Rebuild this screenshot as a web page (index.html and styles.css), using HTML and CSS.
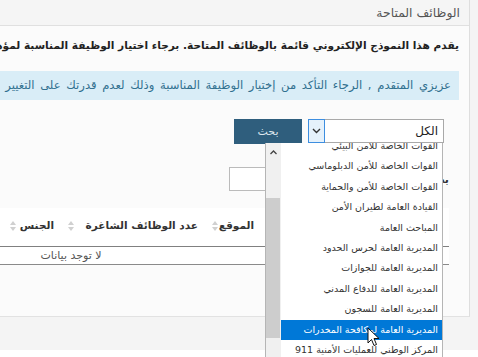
FILE: index.html
```html
<!DOCTYPE html>
<html lang="ar" dir="rtl">
<head>
    <meta charset="UTF-8">
    <meta name="viewport" content="width=device-width, initial-scale=1.0">
    <title>الوظائف المتاحة</title>
    <link rel="stylesheet" href="styles.css">
</head>
<body>
    <div class="page">
        <div class="panel">
            <div class="panel-heading">الوظائف المتاحة</div>
            <div class="panel-body">
                <p class="intro">يقدم هذا النموذج الإلكتروني قائمة بالوظائف المتاحة. برجاء اختيار الوظيفة المناسبة لمؤهلاتك العلمية وخبراتك العملية.</p>
                <div class="alert">عزيزي المتقدم , الرجاء التأكد من إختيار الوظيفة المناسبة وذلك لعدم قدرتك على التغيير فيما بعد.</div>

                <div class="search-row">
                    <div class="select-wrap">
                        <div class="select">
                            <span class="select-value">الكل</span>
                            <span class="select-arrow">
                                <svg width="9" height="6" viewBox="0 0 9 6"><path d="M1 1 L4.5 4.5 L8 1" fill="none" stroke="#333" stroke-width="1.4"/></svg>
                            </span>
                        </div>
                        <div class="select-list">
                            <ul class="options">
                                <li>القوات الخاصة للأمن البيئي</li>
                                <li>القوات الخاصة للأمن الدبلوماسي</li>
                                <li>القوات الخاصة للأمن والحماية</li>
                                <li>القيادة العامة لطيران الأمن</li>
                                <li>المباحث العامة</li>
                                <li>المديرية العامة لحرس الحدود</li>
                                <li>المديرية العامة للجوازات</li>
                                <li>المديرية العامة للدفاع المدني</li>
                                <li>المديرية العامة للسجون</li>
                                <li class="selected">المديرية العامة لمكافحة المخدرات</li>
                                <li>المركز الوطني للعمليات الأمنية 911</li>
                            </ul>
                            <div class="scrollbar">
                                <span class="scroll-up">
                                    <svg width="7" height="5" viewBox="0 0 7 5"><path d="M0.5 4 L3.5 1 L6.5 4" fill="none" stroke="#444" stroke-width="1.3"/></svg>
                                </span>
                                <span class="scroll-thumb"></span>
                            </div>
                        </div>
                    </div>
                    <button class="btn-search">بحث</button>
                </div>

                <div class="table-wrap">
                    <div class="table-tools">
                        <label class="filter">بحث: <input type="search"></label>
                    </div>
                    <table class="jobs">
                        <colgroup>
                            <col style="width: 187px">
                            <col style="width: 56px">
                            <col style="width: 144px">
                            <col style="width: 58px">
                            <col>
                        </colgroup>
                        <thead>
                            <tr>
                                <th>الوظيفة</th>
                                <th>الموقع<span class="sort"><svg width="6" height="10" viewBox="0 0 6 10"><path d="M3 0 L6 4 L0 4 Z M3 10 L6 6 L0 6 Z" fill="#d0d0d0"/></svg></span></th>
                                <th>عدد الوظائف الشاغرة<span class="sort"><svg width="6" height="10" viewBox="0 0 6 10"><path d="M3 0 L6 4 L0 4 Z M3 10 L6 6 L0 6 Z" fill="#d0d0d0"/></svg></span></th>
                                <th>الجنس<span class="sort"><svg width="6" height="10" viewBox="0 0 6 10"><path d="M3 0 L6 4 L0 4 Z M3 10 L6 6 L0 6 Z" fill="#d0d0d0"/></svg></span></th>
                                <th></th>
                            </tr>
                        </thead>
                        <tbody>
                            <tr>
                                <td colspan="5" class="empty">لا توجد بيانات</td>
                            </tr>
                        </tbody>
                    </table>
                </div>
            </div>
        </div>
        <div class="page-gap"></div>
    </div>

    <svg class="cursor" width="13" height="20" viewBox="0 0 13 20">
        <path d="M1 1 L1 16 L4.5 12.5 L7 18.5 L9.5 17.5 L7 11.5 L12 11.5 Z" fill="#fff" stroke="#111" stroke-width="1" stroke-linejoin="round"/>
    </svg>
</body>
</html>
```

FILE: styles.css
```css
body {
    font-family: "DejaVu Sans", sans-serif;
    margin: 0;
    padding: 0;
    background-color: #fff;
    color: #333;
    overflow: hidden;
    height: 357px;
}

.page {
    padding-right: 8px;
    background-color: #f4f4f4;
}

.panel {
    width: 1000px;
    border-right: 1px solid #dedede;
    border-bottom: 1px solid #e2e2e2;
    background-color: #fbfbfb;
}

.panel-heading {
    height: 25px;
    line-height: 25px;
    padding-right: 9px;
    font-size: 12.4px;
    color: #555;
    background-color: #f5f5f5;
    border-bottom: 1px solid #e0e0e0;
}

.panel-body {
    padding: 12px 10px 51px 0;
}

.intro {
    margin: 0;
    font-size: 10.6px;
    line-height: 15px;
    font-weight: bold;
    color: #222;
    white-space: nowrap;
}

.alert {
    margin-top: 18px;
    padding: 7px 8px;
    font-size: 11.6px;
    line-height: 15px;
    word-spacing: 2px;
    color: #31708f;
    background-color: #d9edf7;
    white-space: nowrap;
}

.search-row {
    display: flex;
    gap: 6px;
    margin-top: 19px;
    padding-right: 15px;
    height: 25px;
}

.select-wrap {
    position: relative;
    width: 136px;
    height: 24px;
}

.select {
    display: flex;
    height: 24px;
    box-sizing: border-box;
    border: 1px solid #a9a9a9;
    background-color: #fff;
}

.select-value {
    flex: 1;
    padding-right: 5px;
    font-size: 12px;
    line-height: 22px;
    color: #222;
}

.select-arrow {
    display: flex;
    align-items: center;
    justify-content: center;
    width: 15px;
    margin: -1px;
    border: 1px solid #3d8ee0;
    background-color: #e5f1fb;
}

.select-list {
    position: absolute;
    top: 24px;
    right: 1px;
    width: 178px;
    height: 216px;
    box-sizing: border-box;
    display: flex;
    overflow: hidden;
    border: 1px solid #b5b5b5;
    border-top: none;
    background-color: #fff;
    z-index: 5;
}

.options {
    flex: 1;
    list-style: none;
    margin: -7px 0 0;
    padding: 0;
}

.options li {
    height: 20.4px;
    line-height: 20.4px;
    padding-right: 4px;
    font-size: 9.5px;
    color: #333;
    white-space: nowrap;
}

.options li.selected {
    background-color: #0078d7;
    color: #fff;
}

.scrollbar {
    position: relative;
    width: 15px;
    background-color: #f0f0f0;
}

.scroll-up {
    display: flex;
    justify-content: center;
    padding-top: 7px;
}

.scroll-thumb {
    position: absolute;
    top: 55px;
    right: 1px;
    left: 0;
    height: 140px;
    background-color: #cdcdcd;
}

.btn-search {
    width: 68px;
    height: 25px;
    padding: 0;
    border: none;
    font-family: "DejaVu Sans", sans-serif;
    font-size: 11px;
    color: #dfe8ef;
    background-color: #2f5e7d;
}

.table-wrap {
    margin-right: 10px;
}

.table-tools {
    margin-top: 23px;
    height: 24px;
}

.filter {
    display: flex;
    align-items: center;
    gap: 4px;
    font-size: 11px;
    font-weight: bold;
    color: #333;
}

.filter input {
    width: 188px;
    height: 24px;
    box-sizing: border-box;
    margin: 0;
    border: 1px solid #bbb;
    background-color: #fff;
}

.jobs {
    width: 756px;
    margin-top: 17px;
    border-collapse: collapse;
    table-layout: fixed;
    background-color: #fff;
}

.jobs th {
    position: relative;
    padding: 10px 8px 13px 14px;
    font-size: 10.5px;
    line-height: 15px;
    font-weight: bold;
    text-align: right;
    color: #333;
    white-space: nowrap;
    border-bottom: 1px solid #808080;
}

.sort {
    position: absolute;
    left: 6px;
    top: 13px;
    line-height: 0;
}

.jobs td {
    padding: 1px 8px;
    font-size: 11px;
    line-height: 15px;
    color: #555;
    border-top: 1px solid #c8c8c8;
    border-bottom: 1px solid #8a8a8a;
}

.jobs td.empty {
    text-align: center;
}

.page-gap {
    height: 33px;
}

.cursor {
    position: absolute;
    top: 327px;
    left: 367px;
    z-index: 10;
}
```
